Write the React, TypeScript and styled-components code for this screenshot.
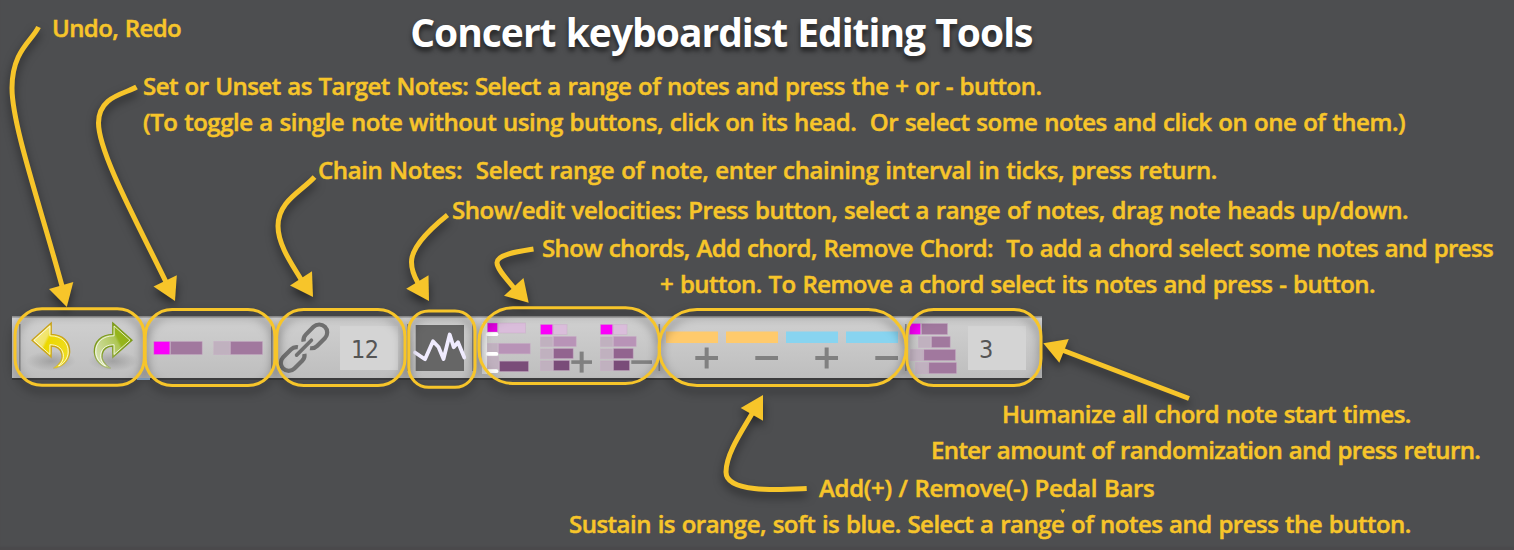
import React from "react";
import styled, { createGlobalStyle } from "styled-components";

const GlobalStyle = createGlobalStyle`
  body { margin: 0; background: #4d4e50; overflow: hidden; }
`;

const GOLD = "#f7c52a";

const Page = styled.main`
  position: relative;
  width: 1514px;
  height: 550px;
  display: flex;
  flex-direction: column;
  overflow: hidden;
  background: #4d4e50;
  font-family: "Open Sans", sans-serif;
  box-shadow: inset 0 -4px 2px -1px #4a494b;
`;

const Header = styled.header`
  display: flex;
  align-items: flex-start;
  height: 68px;
`;

const Note = styled.p<{ $indent: number; $gap?: number; $track: number }>`
  margin: ${(p) => p.$gap ?? 0}px 0 0 ${(p) => p.$indent}px;
  height: 36px;
  flex: none;
  align-self: flex-start;
  line-height: 36px;
  font-size: 24px;
  font-weight: 600;
  letter-spacing: ${(p) => p.$track}px;
  word-spacing: 1px;
  white-space: pre;
  color: ${GOLD};
  -webkit-text-stroke: 0.5px ${GOLD};
`;

const Title = styled.h1`
  margin: 4px 0 0 229px;
  line-height: 56px;
  font-size: 39px;
  font-weight: 700;
  letter-spacing: -1px;
  word-spacing: 1px;
  white-space: pre;
  color: #fff;
  text-shadow: 0 4px 5px rgba(0, 0, 0, 0.6);
`;

const Toolbar = styled.div`
  display: flex;
  flex: none;
  width: 1030px;
  height: 62px;
  margin: 14px 0 0 12px;
  background: linear-gradient(#8f8f8f 0, #8f8f8f 1px, #a9a9a9 1px, #a9a9a9 2px, #d0d0d0 2px, #bebebe 100%);
  box-shadow: 0 2px 0 #3c3c3d;
`;

const Group = styled.div<{ $w: number; $start?: number }>`
  display: flex;
  flex: none;
  width: ${(p) => p.$w}px;
  padding-left: ${(p) => p.$start ?? 0}px;
  box-sizing: border-box;
`;

const Field = styled.div`
  width: 58px;
  height: 44px;
  margin: 10px 0 0 8px;
  padding-left: 11px;
  box-sizing: border-box;
  background: #d4d4d4;
  color: #555;
  font-family: "DejaVu Sans Condensed", "DejaVu Sans", sans-serif;
  font-stretch: condensed;
  font-size: 25px;
  letter-spacing: -0.5px;
  line-height: 48px;
`;

const Overlay = styled.svg`
  position: absolute;
  inset: 0;
  pointer-events: none;
`;

const Shadowed = styled.g`
  filter: drop-shadow(0 5px 5px rgba(0, 0, 0, 0.5));
`;

const C = {
  magenta: "#fa00fa",
  pink: "#dabddb",
  pale: "#c0b1bf",
  mauve: "#a1789e",
  lilac: "#b893b7",
  plum: "#92648f",
  dark: "#7a4c79",
  grey: "#808080",
};

type Bar = [number, number, number, number, string];

function Bars({ width, bars, children }: { width: number; bars: Bar[]; children?: React.ReactNode }) {
  return (
    <svg width={width} height={62}>
      {bars.map(([x, y, w, h, fill], i) => (
        <rect key={i} x={x + 0.5} y={y + 0.5} width={w - 1} height={h - 1} fill={fill} stroke="#c8a8c6" strokeOpacity={0.4} />
      ))}
      {children}
    </svg>
  );
}

function CurvedArrow({ redo }: { redo?: boolean }) {
  const id = redo ? "redo" : "undo";
  const edge = redo ? "#7d9a1c" : "#c9a21a";
  const d =
    "M10 24.3 L29.2 7 V18.4 C41 18.6 48 26 47.7 36 C47.3 45 40 51.5 31.3 52.3 C38 48 41 43 39.8 38 C38.6 32.5 34 30 29.2 30 V41.2 Z";
  return (
    <svg width={60} height={62}>
      <defs>
        <linearGradient id={id} x1="0" y1="0" x2="1" y2="0.6">
          <stop offset="0" stopColor={redo ? "#8fae10" : "#f6ec9a"} />
          <stop offset="0.42" stopColor={redo ? "#96b51c" : "#f1e468"} />
          <stop offset="0.48" stopColor={redo ? "#aec655" : "#ecd800"} />
          <stop offset="1" stopColor={redo ? "#d3dfa8" : "#efdc20"} />
        </linearGradient>
        <linearGradient id={id + "Fade"} x1="0" y1="0" x2="0" y2="1">
          <stop offset="0.6" stopColor={edge} />
          <stop offset="1" stopColor={edge} stopOpacity="0.3" />
        </linearGradient>
        <radialGradient id={id + "Floor"}>
          <stop offset="0" stopColor="#000" stopOpacity="0.17" />
          <stop offset="1" stopColor="#000" stopOpacity="0" />
        </radialGradient>
      </defs>
      <g transform={redo ? "translate(60 0) scale(-1 1)" : undefined}>
        <ellipse cx="29" cy="45" rx="25" ry="10" fill={`url(#${id}Floor)`} />
        <path d={d} fill={`url(#${id})`} stroke={`url(#${id}Fade)`} strokeWidth="1.3" />
        <path
          d="M12 24.3 L27.9 10 V19.8 C40 19.7 46.5 27 46.2 36 C46 43 41 48 36.5 50 C40.5 46 42.3 42 41 37 C39.5 31.5 34.5 28.7 27.9 28.7 V38.4 Z"
          fill="none"
          stroke="#fff"
          strokeOpacity="0.75"
          strokeWidth="1"
        />
      </g>
    </svg>
  );
}

const LINK = "M4 -4.6 A8 8 0 0 1 10.5 -8 H21.5 A8 8 0 0 1 21.5 8 H10.5 A8 8 0 0 1 4 4.6";

function ChainLink() {
  return (
    <svg width={56} height={62}>
      <g fill="none" stroke="#707070" strokeWidth="4.2" transform="translate(28 31.7) rotate(-45)">
        <path d={LINK} />
        <path d={LINK} transform="rotate(180)" />
        <path d="M-10.5 0 H10.5" strokeWidth="3.6" strokeLinecap="round" />
      </g>
    </svg>
  );
}

const Sign = ({ x, y, w, t, plus }: { x: number; y: number; w: number; t: number; plus?: boolean }) => (
  <g fill={C.grey}>
    <rect x={x} y={y} width={w} height={t} />
    {plus && <rect x={x + w / 2 - 2} y={y + t / 2 - 10.5} width={4} height={21} />}
  </g>
);

const chordBars: Bar[] = [
  [4, 8, 13, 11, C.magenta],
  [17, 8, 14.5, 11, C.pink],
  [4, 20.5, 13, 10.5, C.pale],
  [17, 20, 23.7, 11, C.lilac],
  [4, 32.5, 13, 10.5, C.pale],
  [17, 32, 20.7, 11, C.plum],
  [4, 44.5, 13, 10.5, C.pale],
  [17, 44, 17, 11, C.dark],
];

const Pedal = ({ color, plus }: { color: string; plus?: boolean }) => (
  <svg width={60} height={62}>
    <rect x={7} y={15.5} width={52} height={11.5} fill={color} />
    <Sign x={36.3} y={40} w={22.7} t={4} plus={plus} />
  </svg>
);

const rings = [
  [15, 308.7, 129.3, 76.6, 27],
  [145.2, 309.5, 129.8, 76, 27],
  [276.7, 309.5, 128.3, 76, 27],
  [408.7, 311, 66.3, 76.3, 20],
  [479, 307.7, 180.5, 75.8, 34],
  [659, 309.5, 247.2, 76, 38],
  [906.7, 309.5, 134.3, 76, 27],
];

const arrows: [string, string][] = [
  ["M38.5 27 C32 41 12 51 12 88 C12 125 40 205 62 286", "49,289 73.3,282 66.8,307"],
  ["M136.5 87 C125 94 98.5 96 98.5 123 C98.5 153 139 226 167 284", "153.5,286.5 176.8,275.3 175,301"],
  ["M314.5 177 C302 191 278 201 278 226 C278 246 294 267 302 281", "290,285.5 312,271.3 313,297"],
  ["M447.5 215 C435 225 411.5 245 411.5 262 C411.5 270 414 276 418 283", "406.2,288.7 428.5,275.3 429,301"],
  ["M533.5 249 C521 251 497 254 497 262.5 C497 269 506 278 514 288", "504,295.7 523.5,278 528.7,302.8"],
  ["M806.7 488.5 C784 489.5 726 494 726 472 C726 454 742 431 753 412", "740.7,408 763,395 763,420.8"],
  ["M1189 398.5 L1062 350", "1043.3,343.3 1068.8,339 1059.3,362.8"],
];

function Annotations() {
  return (
    <Overlay width={1514} height={550}>
      <Shadowed>
        {rings.map(([x, y, w, h, r], i) => (
          <rect key={i} x={x} y={y} width={w} height={h} rx={r} fill="none" stroke={GOLD} strokeWidth="3" />
        ))}
        {arrows.map(([d, head], i) => (
          <g key={i}>
            <path d={d} fill="none" stroke={GOLD} strokeWidth="5" />
            <polygon points={head} fill={GOLD} />
          </g>
        ))}
      </Shadowed>
      <path d="M1060.5 509.5 h4.5 l-2.2 4 z" fill={GOLD} />
    </Overlay>
  );
}

const separators = [19, 271, 407, 472, 658.5, 905];

export default function App() {
  return (
    <Page>
      <GlobalStyle />
      <Header>
        <Note $indent={52} $gap={10} $track={-0.6}>Undo, Redo</Note>
        <Title>Concert keyboardist Editing Tools</Title>
      </Header>
      <Note $indent={143} $track={-0.54}>Set or Unset as Target Notes: Select a range of notes and press the + or - button.</Note>
      <Note $indent={143} $track={-0.47}>(To toggle a single note without using buttons, click on its head.  Or select some notes and click on one of them.)</Note>
      <Note $indent={318} $gap={12} $track={-0.37}>Chain Notes:  Select range of note, enter chaining interval in ticks, press return.</Note>
      <Note $indent={452} $gap={4} $track={-0.46}>Show/edit velocities: Press button, select a range of notes, drag note heads up/down.</Note>
      <Note $indent={542} $gap={2} $track={-0.62}>Show chords, Add chord, Remove Chord:  To add a chord select some notes and press</Note>
      <Note $indent={660} $track={-0.53}>+ button. To Remove a chord select its notes and press - button.</Note>

      <Toolbar>
        <Group $w={134} $start={10}>
          <CurvedArrow />
          <CurvedArrow redo />
        </Group>
        <Group $w={130}>
          <Bars
            width={130}
            bars={[
              [7.3, 25, 17, 14, C.magenta],
              [24, 25, 32.7, 14, C.mauve],
              [67.3, 25, 17, 14, C.pale],
              [84, 25, 33, 14, C.mauve],
            ]}
          />
        </Group>
        <Group $w={131}>
          <ChainLink />
          <Field>12</Field>
        </Group>
        <Group $w={69}>
          <svg width={69} height={62}>
            <rect x={8.7} y={9} width={48.3} height={46} fill="#666" />
            <polyline
              points="8,36.5 18,43.3 26,25.3 31.5,31 36.5,43 42.7,18.5 46.7,31.3 51,26.3 57.3,41.5"
              fill="none"
              stroke="#f0ecff"
              strokeWidth="3.8"
              strokeLinejoin="round"
              strokeLinecap="round"
            />
          </svg>
        </Group>
        <Group $w={183}>
          <Bars
            width={60}
            bars={[
              [11, 6.5, 11, 10, "#e600e6"],
              [22, 6.5, 28, 11, C.pink],
              [11, 27, 11, 11, C.pale],
              [22, 27, 32.7, 11.3, C.lilac],
              [11, 40, 12, 13, C.pale],
              [23, 44.7, 30, 11.3, C.dark],
            ]}
          >
            <g fill="#fff">
              <rect x={6} y={7} width={5} height={51} opacity={0.6} />
              <rect x={10} y={16.3} width={12.3} height={3.8} rx={1.9} />
              <rect x={10} y={36} width={12.3} height={3.8} rx={1.9} />
              <rect x={10} y={53.3} width={12.3} height={3.8} rx={1.9} />
            </g>
          </Bars>
          <Bars width={60} bars={chordBars}>
            <Sign x={35.3} y={44.3} w={20.7} t={3.6} plus />
          </Bars>
          <Bars width={60} bars={chordBars}>
            <Sign x={35.3} y={44.3} w={20.7} t={3.6} />
          </Bars>
        </Group>
        <Group $w={247}>
          <Pedal color="#ffca6c" plus />
          <Pedal color="#ffca6c" />
          <Pedal color="#88d4f0" plus />
          <Pedal color="#88d4f0" />
        </Group>
        <Group $w={136}>
          <Bars
            width={54}
            bars={[
              [3, 7, 12, 12, C.magenta],
              [15, 7, 27, 12, C.mauve],
              [12, 20, 13, 12, C.pale],
              [25, 20, 19.7, 12, C.mauve],
              [4, 33, 13.5, 12, C.pale],
              [17.3, 33, 32.7, 12, C.mauve],
              [9, 46, 13.5, 12, C.pale],
              [22.3, 46, 28.7, 12, C.mauve],
            ]}
          />
          <Field>3</Field>
        </Group>
      </Toolbar>

      <Note $indent={1002} $gap={18} $track={-0.51}>Humanize all chord note start times.</Note>
      <Note $indent={931} $track={-0.62}>Enter amount of randomization and press return.</Note>
      <Note $indent={819} $gap={2} $track={-0.34}>Add(+) / Remove(-) Pedal Bars</Note>
      <Note $indent={569} $track={-0.51}>Sustain is orange, soft is blue. Select a range of notes and press the button.</Note>
      <Overlay width={1514} height={550}>
        {separators.map((x) => (
          <rect key={x} x={x} y={324} width={1.6} height={47} fill="#8b8b8b" />
        ))}
        <rect x={137} y={378} width={13} height={2} fill="#8fafd0" />
      </Overlay>
      <Annotations />
    </Page>
  );
}
